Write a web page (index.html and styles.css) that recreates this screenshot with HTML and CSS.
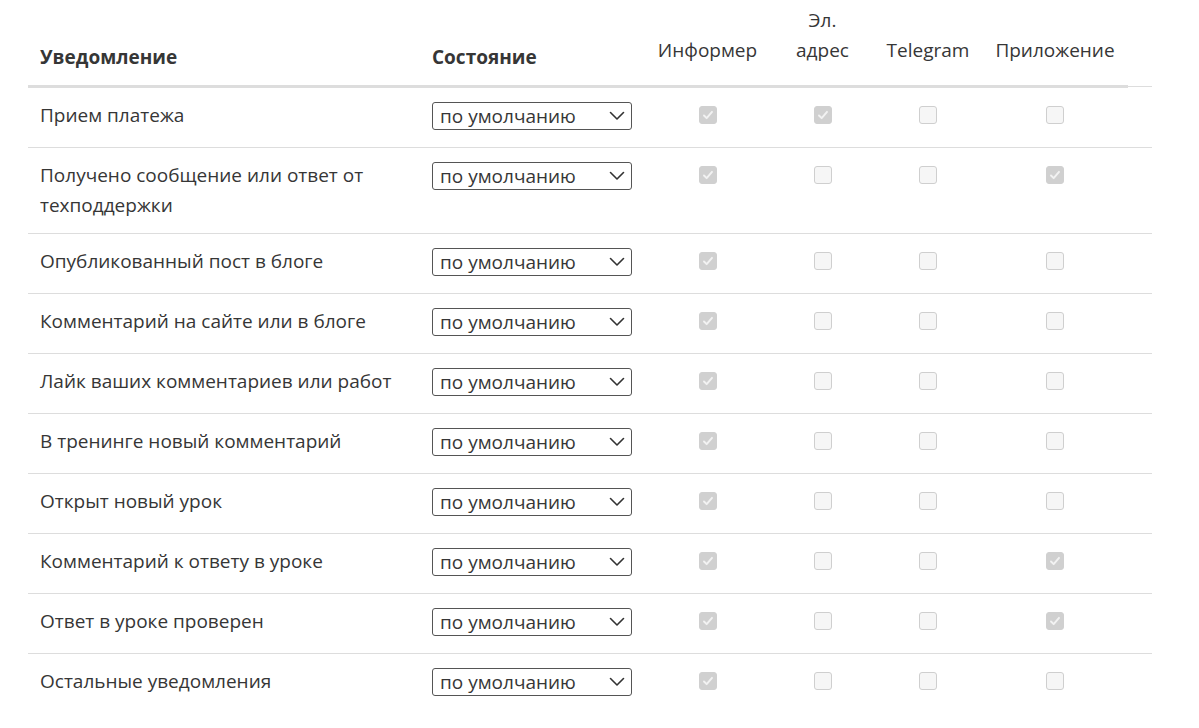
FILE: index.html
```html
<!DOCTYPE html>
<html lang="ru">
<head>
<meta charset="utf-8">
<title>Уведомления</title>
<link rel="stylesheet" href="styles.css">
</head>
<body>
<div class="page">
<table class="notif">
  <colgroup>
    <col class="c-name"><col class="c-state"><col class="c-inf"><col class="c-mail"><col class="c-tg"><col class="c-app"><col class="c-pad">
  </colgroup>
  <thead>
    <tr>
      <th class="th-left">Уведомление</th>
      <th class="th-left">Состояние</th>
      <th class="th-ch">Информер</th>
      <th class="th-ch th-mail">Эл. адрес</th>
      <th class="th-ch">Telegram</th>
      <th class="th-ch">Приложение</th>
      <th class="th-pad"></th>
    </tr>
  </thead>
  <tbody>
    <tr>
      <td>Прием платежа</td>
      <td><div class="sel"><select><option>по умолчанию</option></select><svg class="chev" width="16" height="10" viewBox="0 0 16 10"><path d="M1.5 1.5 L8 8 L14.5 1.5" fill="none" stroke="#333" stroke-width="1.6" stroke-linecap="round" stroke-linejoin="round"/></svg></div></td>
      <td class="ch"><span class="cb on"><svg viewBox="0 0 18 18"><path d="M4.5 9.5 L7.5 12.5 L13.5 5.5" fill="none" stroke="#f2f2f2" stroke-width="2.2" stroke-linecap="round" stroke-linejoin="round"/></svg></span></td>
      <td class="ch"><span class="cb on"><svg viewBox="0 0 18 18"><path d="M4.5 9.5 L7.5 12.5 L13.5 5.5" fill="none" stroke="#f2f2f2" stroke-width="2.2" stroke-linecap="round" stroke-linejoin="round"/></svg></span></td>
      <td class="ch"><span class="cb"></span></td>
      <td class="ch"><span class="cb"></span></td>
      <td></td>
    </tr>
    <tr>
      <td>Получено сообщение или ответ от техподдержки</td>
      <td><div class="sel"><select><option>по умолчанию</option></select><svg class="chev" width="16" height="10" viewBox="0 0 16 10"><path d="M1.5 1.5 L8 8 L14.5 1.5" fill="none" stroke="#333" stroke-width="1.6" stroke-linecap="round" stroke-linejoin="round"/></svg></div></td>
      <td class="ch"><span class="cb on"><svg viewBox="0 0 18 18"><path d="M4.5 9.5 L7.5 12.5 L13.5 5.5" fill="none" stroke="#f2f2f2" stroke-width="2.2" stroke-linecap="round" stroke-linejoin="round"/></svg></span></td>
      <td class="ch"><span class="cb"></span></td>
      <td class="ch"><span class="cb"></span></td>
      <td class="ch"><span class="cb on"><svg viewBox="0 0 18 18"><path d="M4.5 9.5 L7.5 12.5 L13.5 5.5" fill="none" stroke="#f2f2f2" stroke-width="2.2" stroke-linecap="round" stroke-linejoin="round"/></svg></span></td>
      <td></td>
    </tr>
    <tr>
      <td>Опубликованный пост в блоге</td>
      <td><div class="sel"><select><option>по умолчанию</option></select><svg class="chev" width="16" height="10" viewBox="0 0 16 10"><path d="M1.5 1.5 L8 8 L14.5 1.5" fill="none" stroke="#333" stroke-width="1.6" stroke-linecap="round" stroke-linejoin="round"/></svg></div></td>
      <td class="ch"><span class="cb on"><svg viewBox="0 0 18 18"><path d="M4.5 9.5 L7.5 12.5 L13.5 5.5" fill="none" stroke="#f2f2f2" stroke-width="2.2" stroke-linecap="round" stroke-linejoin="round"/></svg></span></td>
      <td class="ch"><span class="cb"></span></td>
      <td class="ch"><span class="cb"></span></td>
      <td class="ch"><span class="cb"></span></td>
      <td></td>
    </tr>
    <tr>
      <td>Комментарий на сайте или в блоге</td>
      <td><div class="sel"><select><option>по умолчанию</option></select><svg class="chev" width="16" height="10" viewBox="0 0 16 10"><path d="M1.5 1.5 L8 8 L14.5 1.5" fill="none" stroke="#333" stroke-width="1.6" stroke-linecap="round" stroke-linejoin="round"/></svg></div></td>
      <td class="ch"><span class="cb on"><svg viewBox="0 0 18 18"><path d="M4.5 9.5 L7.5 12.5 L13.5 5.5" fill="none" stroke="#f2f2f2" stroke-width="2.2" stroke-linecap="round" stroke-linejoin="round"/></svg></span></td>
      <td class="ch"><span class="cb"></span></td>
      <td class="ch"><span class="cb"></span></td>
      <td class="ch"><span class="cb"></span></td>
      <td></td>
    </tr>
    <tr>
      <td>Лайк ваших комментариев или работ</td>
      <td><div class="sel"><select><option>по умолчанию</option></select><svg class="chev" width="16" height="10" viewBox="0 0 16 10"><path d="M1.5 1.5 L8 8 L14.5 1.5" fill="none" stroke="#333" stroke-width="1.6" stroke-linecap="round" stroke-linejoin="round"/></svg></div></td>
      <td class="ch"><span class="cb on"><svg viewBox="0 0 18 18"><path d="M4.5 9.5 L7.5 12.5 L13.5 5.5" fill="none" stroke="#f2f2f2" stroke-width="2.2" stroke-linecap="round" stroke-linejoin="round"/></svg></span></td>
      <td class="ch"><span class="cb"></span></td>
      <td class="ch"><span class="cb"></span></td>
      <td class="ch"><span class="cb"></span></td>
      <td></td>
    </tr>
    <tr>
      <td>В тренинге новый комментарий</td>
      <td><div class="sel"><select><option>по умолчанию</option></select><svg class="chev" width="16" height="10" viewBox="0 0 16 10"><path d="M1.5 1.5 L8 8 L14.5 1.5" fill="none" stroke="#333" stroke-width="1.6" stroke-linecap="round" stroke-linejoin="round"/></svg></div></td>
      <td class="ch"><span class="cb on"><svg viewBox="0 0 18 18"><path d="M4.5 9.5 L7.5 12.5 L13.5 5.5" fill="none" stroke="#f2f2f2" stroke-width="2.2" stroke-linecap="round" stroke-linejoin="round"/></svg></span></td>
      <td class="ch"><span class="cb"></span></td>
      <td class="ch"><span class="cb"></span></td>
      <td class="ch"><span class="cb"></span></td>
      <td></td>
    </tr>
    <tr>
      <td>Открыт новый урок</td>
      <td><div class="sel"><select><option>по умолчанию</option></select><svg class="chev" width="16" height="10" viewBox="0 0 16 10"><path d="M1.5 1.5 L8 8 L14.5 1.5" fill="none" stroke="#333" stroke-width="1.6" stroke-linecap="round" stroke-linejoin="round"/></svg></div></td>
      <td class="ch"><span class="cb on"><svg viewBox="0 0 18 18"><path d="M4.5 9.5 L7.5 12.5 L13.5 5.5" fill="none" stroke="#f2f2f2" stroke-width="2.2" stroke-linecap="round" stroke-linejoin="round"/></svg></span></td>
      <td class="ch"><span class="cb"></span></td>
      <td class="ch"><span class="cb"></span></td>
      <td class="ch"><span class="cb"></span></td>
      <td></td>
    </tr>
    <tr>
      <td>Комментарий к ответу в уроке</td>
      <td><div class="sel"><select><option>по умолчанию</option></select><svg class="chev" width="16" height="10" viewBox="0 0 16 10"><path d="M1.5 1.5 L8 8 L14.5 1.5" fill="none" stroke="#333" stroke-width="1.6" stroke-linecap="round" stroke-linejoin="round"/></svg></div></td>
      <td class="ch"><span class="cb on"><svg viewBox="0 0 18 18"><path d="M4.5 9.5 L7.5 12.5 L13.5 5.5" fill="none" stroke="#f2f2f2" stroke-width="2.2" stroke-linecap="round" stroke-linejoin="round"/></svg></span></td>
      <td class="ch"><span class="cb"></span></td>
      <td class="ch"><span class="cb"></span></td>
      <td class="ch"><span class="cb on"><svg viewBox="0 0 18 18"><path d="M4.5 9.5 L7.5 12.5 L13.5 5.5" fill="none" stroke="#f2f2f2" stroke-width="2.2" stroke-linecap="round" stroke-linejoin="round"/></svg></span></td>
      <td></td>
    </tr>
    <tr>
      <td>Ответ в уроке проверен</td>
      <td><div class="sel"><select><option>по умолчанию</option></select><svg class="chev" width="16" height="10" viewBox="0 0 16 10"><path d="M1.5 1.5 L8 8 L14.5 1.5" fill="none" stroke="#333" stroke-width="1.6" stroke-linecap="round" stroke-linejoin="round"/></svg></div></td>
      <td class="ch"><span class="cb on"><svg viewBox="0 0 18 18"><path d="M4.5 9.5 L7.5 12.5 L13.5 5.5" fill="none" stroke="#f2f2f2" stroke-width="2.2" stroke-linecap="round" stroke-linejoin="round"/></svg></span></td>
      <td class="ch"><span class="cb"></span></td>
      <td class="ch"><span class="cb"></span></td>
      <td class="ch"><span class="cb on"><svg viewBox="0 0 18 18"><path d="M4.5 9.5 L7.5 12.5 L13.5 5.5" fill="none" stroke="#f2f2f2" stroke-width="2.2" stroke-linecap="round" stroke-linejoin="round"/></svg></span></td>
      <td></td>
    </tr>
    <tr>
      <td>Остальные уведомления</td>
      <td><div class="sel"><select><option>по умолчанию</option></select><svg class="chev" width="16" height="10" viewBox="0 0 16 10"><path d="M1.5 1.5 L8 8 L14.5 1.5" fill="none" stroke="#333" stroke-width="1.6" stroke-linecap="round" stroke-linejoin="round"/></svg></div></td>
      <td class="ch"><span class="cb on"><svg viewBox="0 0 18 18"><path d="M4.5 9.5 L7.5 12.5 L13.5 5.5" fill="none" stroke="#f2f2f2" stroke-width="2.2" stroke-linecap="round" stroke-linejoin="round"/></svg></span></td>
      <td class="ch"><span class="cb"></span></td>
      <td class="ch"><span class="cb"></span></td>
      <td class="ch"><span class="cb"></span></td>
      <td></td>
    </tr>
  </tbody>
</table>
</div>
</body>
</html>
```

FILE: styles.css
```css
html, body {
  margin: 0;
  padding: 0;
  background: #ffffff;
}

.page {
  padding-left: 28px;
}

.notif {
  border-collapse: collapse;
  table-layout: fixed;
  width: 1124px;
  font-family: "Open Sans", "Noto Sans", sans-serif;
  font-size: 19px;
  color: #363636;
}

.c-name { width: 392px; }
.c-state { width: 224px; }
.c-inf { width: 127px; }
.c-mail { width: 103px; }
.c-tg { width: 108px; }
.c-app { width: 146px; }
.c-pad { width: 24px; }

.notif thead tr {
  height: 86px;
}

.notif th {
  font-weight: 400;
  vertical-align: bottom;
  text-align: center;
  line-height: 30px;
  padding: 0 6px 20px;
  border-bottom: 3px solid #dddddd;
}

.notif th.th-mail {
  padding-left: 14px;
  padding-right: 14px;
}

.notif th.th-left {
  text-align: left;
  font-weight: 700;
  padding: 0 12px 13px;
}

.notif th.th-pad {
  padding: 0;
  border-bottom: 1px solid #dddddd;
}

.notif td {
  vertical-align: top;
  padding: 12px 12px 13px;
  line-height: 30px;
  height: 34px;
  border-bottom: 1px solid #dddddd;
}

.notif tbody tr:last-child td {
  border-bottom: none;
}

.notif td.ch {
  text-align: center;
}

.sel {
  position: relative;
  width: 200px;
  height: 28px;
  margin-top: 1px;
}

.sel select {
  -webkit-appearance: none;
  appearance: none;
  box-sizing: border-box;
  width: 200px;
  height: 28px;
  margin: 0;
  padding: 0 0 0 7px;
  border: 1px solid #555555;
  border-radius: 3px;
  background: #ffffff;
  font-family: inherit;
  font-size: 19px;
  color: #363636;
  line-height: 26px;
}

.chev {
  position: absolute;
  right: 7px;
  top: 10px;
  pointer-events: none;
}

.cb {
  display: inline-block;
  box-sizing: border-box;
  width: 18px;
  height: 18px;
  margin-top: 6px;
  vertical-align: top;
  border: 1px solid #cfcfcf;
  border-radius: 3px;
  background: #f6f6f6;
}

.cb.on {
  border-color: #d0d0d0;
  background: #d0d0d0;
}

.cb svg {
  display: block;
  width: 16px;
  height: 16px;
}
```
